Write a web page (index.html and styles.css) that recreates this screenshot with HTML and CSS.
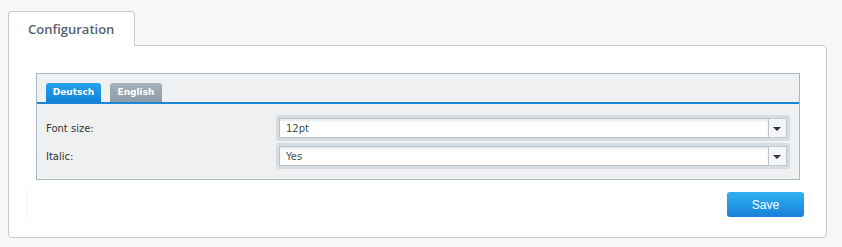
FILE: index.html
```html
<!DOCTYPE html>
<html lang="de">
<head>
    <meta charset="UTF-8">
    <title>Configuration</title>
    <link rel="stylesheet" href="styles.css">
</head>
<body>
    <div class="page">
        <div class="page-tab">Configuration</div>

        <div class="panel">
            <!-- Sprach-Tabs -->
            <div class="lang-box">
                <div class="lang-tabs">
                    <span class="lang-tab active">Deutsch</span>
                    <span class="lang-tab">English</span>
                </div>

                <div class="form-rows">
                    <div class="form-row">
                        <label>Font size:</label>
                        <div class="select">
                            <div class="select-value">12pt</div>
                            <div class="select-arrow"></div>
                        </div>
                    </div>
                    <div class="form-row">
                        <label>Italic:</label>
                        <div class="select">
                            <div class="select-value">Yes</div>
                            <div class="select-arrow"></div>
                        </div>
                    </div>
                </div>
            </div>

            <div class="panel-footer">
                <button class="save-btn">Save</button>
            </div>
        </div>
    </div>
</body>
</html>
```

FILE: styles.css
```css
* {
    margin: 0;
    padding: 0;
    box-sizing: border-box;
}

body {
    background: #f7f8f8;
    font-family: 'DejaVu Sans', sans-serif;
}

.page {
    padding: 11px 16px 0 8px;
}

/* Haupt-Tab */
.page-tab {
    position: relative;
    z-index: 1;
    width: 127px;
    height: 35px;
    margin-bottom: -1px;
    padding: 8px 0 0 19px;
    background: #fff;
    border: 1px solid #c6c8ca;
    border-bottom: none;
    border-radius: 4px 4px 0 0;
    font-family: 'Open Sans', sans-serif;
    font-size: 13px;
    font-weight: 600;
    color: #556270;
}

.panel {
    width: 819px;
    height: 193px;
    padding-top: 27px;
    background: #fff;
    border: 1px solid #c6c8ca;
    border-radius: 0 4px 4px 4px;
}

/* Sprachbox */
.lang-box {
    margin: 0 26px 0 27px;
    height: 107px;
    background: #eff0f2;
    border: 1px solid #a9b7be;
}

.lang-tabs {
    display: flex;
    gap: 9px;
    padding: 9px 0 0 9px;
    border-bottom: 2px solid #1a84d5;
}

.lang-tab {
    width: 52px;
    height: 19px;
    padding-top: 4px;
    text-align: center;
    font-size: 9px;
    font-weight: bold;
    color: #fff;
    background: linear-gradient(#a6b2bc, #8d9ba7);
    border-radius: 3px 3px 0 0;
}

.lang-tab.active {
    width: 55px;
    background: linear-gradient(#27a2ec, #1282d8);
}

.form-rows {
    padding-top: 10px;
}

.form-row {
    display: flex;
    align-items: center;
    height: 28px;
}

.form-row label {
    width: 239px;
    padding-left: 9px;
    font-size: 10px;
    color: #333;
}

.select {
    display: flex;
    width: 514px;
    height: 26px;
    padding: 3px;
    background: #d6dce2;
    border-radius: 3px;
}

.select-value {
    flex: 1;
    padding: 4px 0 0 6px;
    background: #fff;
    border: 1px solid #bcc3ca;
    box-shadow: inset 0 2px 2px #e6e9ec;
    font-size: 10px;
    color: #4a4f55;
}

.select-arrow {
    position: relative;
    width: 18px;
    background: #f4f5f6;
    border: 1px solid #c4cad0;
    border-left: none;
}

.select-arrow::after {
    content: '';
    position: absolute;
    left: 4px;
    top: 8px;
    border-left: 4px solid transparent;
    border-right: 4px solid transparent;
    border-top: 4px solid #333;
}

/* Fußzeile */
.panel-footer {
    display: flex;
    justify-content: flex-end;
    height: 30px;
    margin: 9px 16px 0 18px;
    padding: 3px 5px 0 0;
    border-left: 1px solid #f1f2f2;
    border-right: 1px solid #f1f2f2;
}

.save-btn {
    width: 77px;
    height: 25px;
    border: none;
    border-radius: 3px;
    background: linear-gradient(#30b2f2, #1a80d8);
    color: #fff;
    font-family: 'Liberation Sans', sans-serif;
    font-size: 12px;
}
```
